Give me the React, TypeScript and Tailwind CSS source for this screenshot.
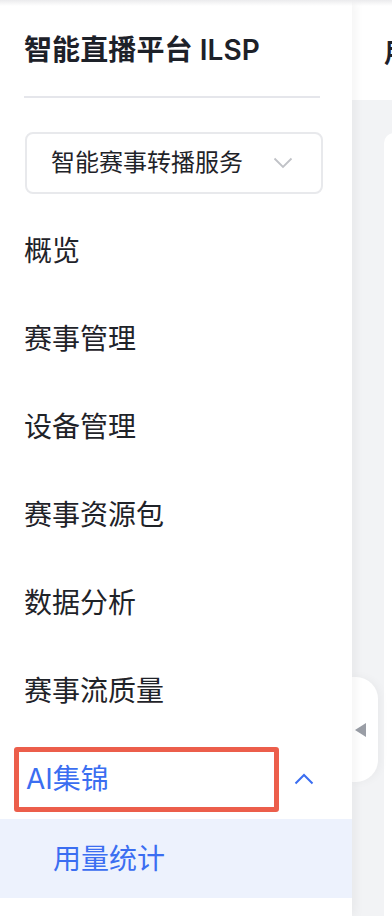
import React from "react";

const font = { fontFamily: '"Inter", "Noto Sans CJK SC", sans-serif' };

function MenuRow({ label }: { label: string }) {
  return (
    <div className="flex h-[80px] items-center pl-6 text-[28px] text-[#1f2329]">
      {label}
    </div>
  );
}

export default function App() {
  return (
    <div
      className="relative flex h-[916px] w-[392px] overflow-hidden bg-white"
      style={font}
    >
      <div className="pointer-events-none absolute left-0 top-0 z-30 h-[6px] w-full bg-gradient-to-b from-[#ebebed] to-transparent" />
      {/* Sidebar */}
      <aside className="relative z-20 flex w-[352px] shrink-0 flex-col bg-white shadow-[3px_0_10px_rgba(0,0,0,0.05)]">
        <div className="flex h-[96px] items-center pl-6 pt-1 text-[28px] font-semibold tracking-[0.1px] text-[#1d2129]">
          智能直播平台 ILSP
        </div>
        <div className="ml-6 h-[2px] w-[296px] bg-[#e5e6eb]" />
        <div className="mt-[34px] ml-[25px] flex h-[62px] w-[298px] items-center justify-between rounded-[8px] border-2 border-[#e8e9ec] pl-6 pr-7">
          <span className="text-[24px] text-[#1f2329]">智能赛事转播服务</span>
          <svg width="20" height="12" viewBox="0 0 20 12" fill="none">
            <path d="M1.5 1.5 L10 10 L18.5 1.5" stroke="#c0c2c7" strokeWidth="1.8" />
          </svg>
        </div>
        <div className="mt-[17px] flex flex-col gap-2">
          <MenuRow label="概览" />
          <MenuRow label="赛事管理" />
          <MenuRow label="设备管理" />
          <MenuRow label="赛事资源包" />
          <MenuRow label="数据分析" />
          <MenuRow label="赛事流质量" />
          <div className="flex h-[80px] items-center justify-between pl-[14px] pr-[38px]">
            <div className="flex h-[65px] w-[265px] items-center rounded-[3px] border-[5px] border-[#ec5e4b] pl-[7px] text-[28px] text-[#3b6ef1]">
              AI集锦
            </div>
            <svg width="20" height="12" viewBox="0 0 20 12" fill="none">
              <path d="M1.5 10.5 L10 2 L18.5 10.5" stroke="#3b6ef1" strokeWidth="2" />
            </svg>
          </div>
        </div>
        <div className="flex h-[79px] items-center bg-[#edf2fd] pl-[53px] text-[28px] text-[#3b6ef1]">
          用量统计
        </div>
      </aside>

      {/* Collapse handle */}
      <div className="absolute left-[350px] top-[677px] z-10 flex h-[105px] w-[28px] items-center justify-start rounded-r-[22px] bg-white pl-[5px] shadow-[3px_0_8px_rgba(0,0,0,0.04)]">
        <div className="h-0 w-0 border-y-[7px] border-r-[11px] border-y-transparent border-r-[#9a9ea6]" />
      </div>

      {/* Main */}
      <main className="flex min-w-0 flex-1 flex-col overflow-hidden bg-[#f2f3f5]">
        <div className="flex h-[100px] items-center bg-white pl-[32px] pt-1 text-[26px] font-semibold text-[#1d2129] whitespace-nowrap">
          用量统计
        </div>
        <div className="flex-1 pl-[32px] pt-[33px]">
          <div className="h-full w-[300px] rounded-tl-[10px] bg-white" />
        </div>
      </main>
    </div>
  );
}
